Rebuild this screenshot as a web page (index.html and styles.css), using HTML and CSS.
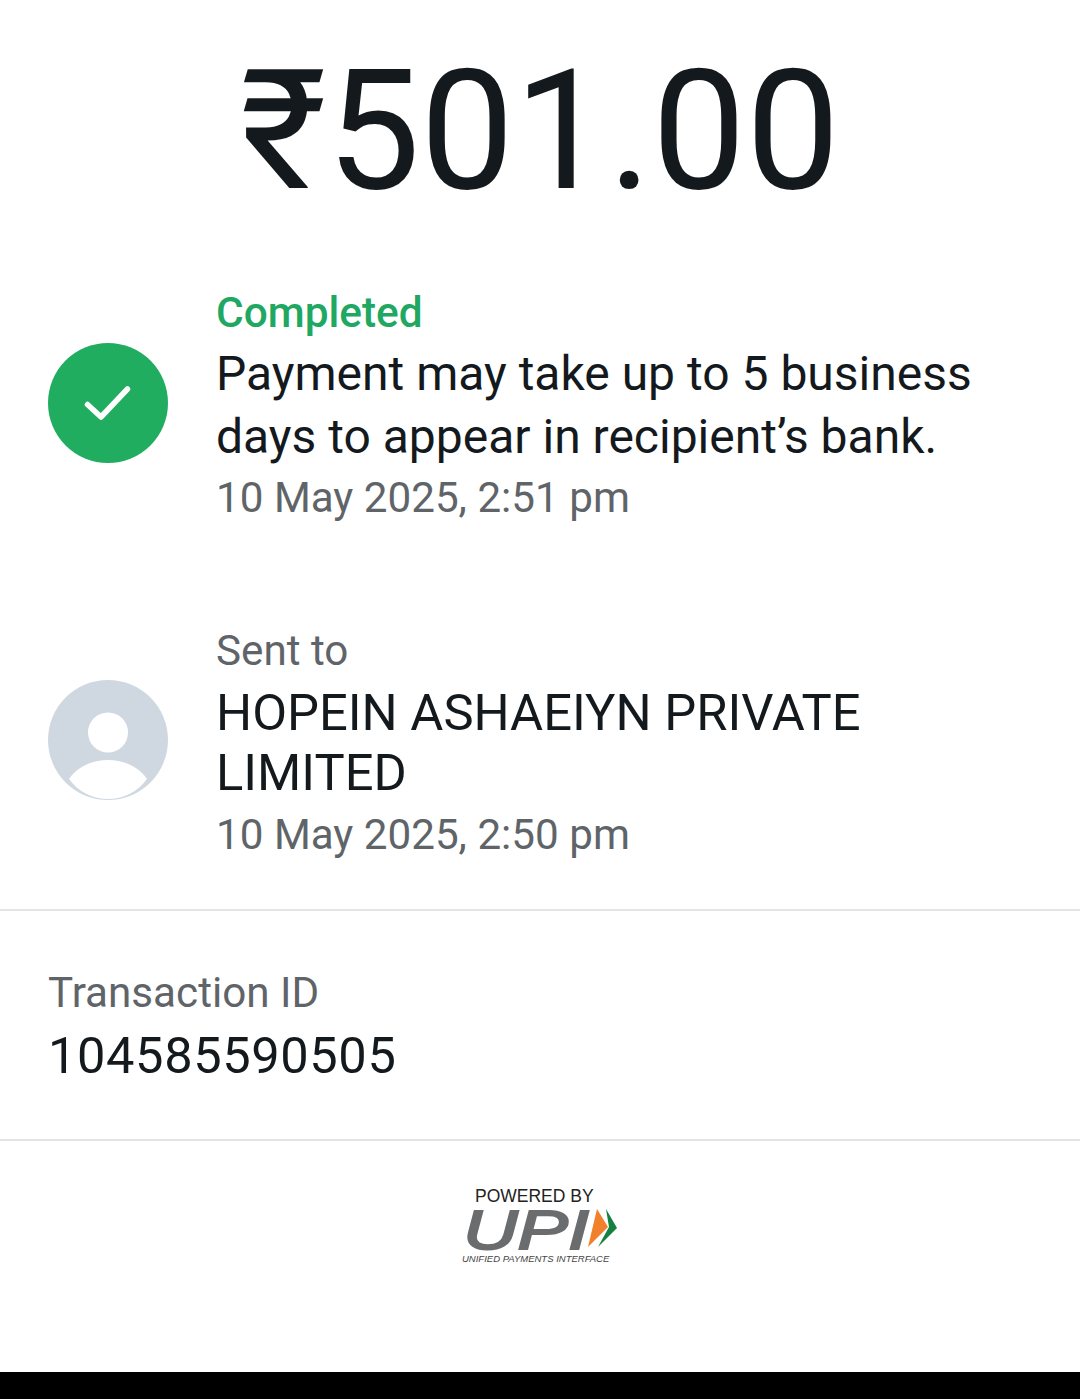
FILE: index.html
```html
<!DOCTYPE html>
<html lang="en">
<head>
  <meta charset="UTF-8">
  <meta name="viewport" content="width=device-width, initial-scale=1.0">
  <title>Payment details</title>
  <link rel="stylesheet" href="styles.css">
</head>
<body>
  <div class="screen">
    <div class="amount">₹501.00</div>

    <div class="step step-status">
      <svg class="step-icon" viewBox="0 0 120 120">
        <circle cx="60" cy="60" r="60" fill="#20ad5f"/>
        <path d="M39.5 61.5 L53 74 L79.5 46" fill="none" stroke="#fff" stroke-width="5.5" stroke-linecap="round" stroke-linejoin="round"/>
      </svg>
      <div class="step-text">
        <div class="status">Completed</div>
        <div class="main">Payment may take up to 5 business days to appear in recipient’s bank.</div>
        <div class="sub">10 May 2025, 2:51 pm</div>
      </div>
    </div>

    <div class="step step-sent">
      <svg class="step-icon" viewBox="0 0 120 120">
        <circle cx="60" cy="60" r="60" fill="#cfd8e0"/>
        <circle cx="60" cy="52.5" r="20" fill="#fff"/>
        <path d="M21 99 C29 87 44 80 60 80 C76 80 91 87 99 99 A48 48 0 0 1 21 99 Z" fill="#fff"/>
      </svg>
      <div class="step-text">
        <div class="sub">Sent to</div>
        <div class="main-name">HOPEIN ASHAEIYN PRIVATE LIMITED</div>
        <div class="sub">10 May 2025, 2:50 pm</div>
      </div>
    </div>

    <div class="txn">
      <div class="sub">Transaction ID</div>
      <div class="txn-id">104585590505</div>
    </div>

    <div class="powered">
      <div class="powered-by">POWERED BY</div>
      <div class="upi-row">
        <svg class="upi-word" viewBox="0 0 128 42">
          <text x="-3" y="41" textLength="126" lengthAdjust="spacingAndGlyphs">UPI</text>
        </svg>
        <svg class="upi-arrows" viewBox="0 0 30 42">
          <polygon points="18,1 29,20 10,39 21,19" fill="#14813f"/>
          <polygon points="9,1 20,19 0,39" fill="#f0802b"/>
        </svg>
      </div>
      <div class="upi-caption">UNIFIED PAYMENTS INTERFACE</div>
    </div>
  </div>
  <div class="nav-bar"></div>
</body>
</html>
```

FILE: styles.css
```css
html, body {
  margin: 0;
  padding: 0;
  background: #fff;
}
body {
  font-family: Roboto, "Liberation Sans", sans-serif;
  color: #14191d;
}
.screen {
  height: 1372px;
  overflow: hidden;
}
.nav-bar {
  height: 27px;
  background: #000;
}
.amount {
  margin-top: 34px;
  height: 195px;
  line-height: 195px;
  font-size: 167px;
  text-align: center;
  white-space: nowrap;
}
.step {
  display: flex;
  align-items: flex-start;
  gap: 49px;
  padding: 0 48px;
}
.step-status {
  margin-top: 55px;
}
.step-status .step-icon {
  margin-top: 59px;
}
.step-sent {
  margin-top: 93px;
  padding-bottom: 44px;
  border-bottom: 2px solid #e2e4e6;
}
.step-sent .step-icon {
  margin-top: 59px;
}
.step-icon {
  width: 120px;
  height: 120px;
  flex: none;
}
.step-text {
  flex: 1;
  margin-left: -1px;
}
.status {
  color: #20a862;
  font-size: 42.4px;
  font-weight: 500;
  line-height: 58px;
}
.main {
  font-size: 48px;
  line-height: 63px;
}
.main-name {
  font-size: 50.7px;
  line-height: 60px;
  margin: 2px 0;
  padding-right: 60px;
}
.sub {
  color: #5f6469;
  font-size: 42.2px;
  line-height: 60px;
}
.txn {
  padding: 52px 48px 52px;
  border-bottom: 2px solid #e2e4e6;
}
.txn-id {
  font-size: 50.6px;
  line-height: 63px;
  margin-top: 1px;
  letter-spacing: 0.6px;
}
.powered {
  width: 156px;
  margin: 46px auto 0;
}
.powered-by {
  font-family: "Liberation Sans", Arial, sans-serif;
  font-size: 17.5px;
  line-height: 18px;
  color: #222;
  padding-left: 13px;
}
.upi-row {
  display: flex;
  height: 42px;
  margin-top: 3px;
  padding-left: 4px;
}
.upi-word {
  width: 128px;
  height: 42px;
  flex: none;
  overflow: visible;
  font-family: "Liberation Sans", Arial, sans-serif;
  font-style: italic;
  font-size: 56px;
  fill: #6b6c6e;
  stroke: #6b6c6e;
  stroke-width: 2px;
}
.upi-arrows {
  width: 30px;
  height: 42px;
  flex: none;
  margin-left: -6px;
}
.upi-caption {
  font-family: "Liberation Sans", Arial, sans-serif;
  font-style: italic;
  font-size: 9.5px;
  line-height: 14px;
  margin-top: 2px;
  color: #444;
  white-space: nowrap;
}
```
